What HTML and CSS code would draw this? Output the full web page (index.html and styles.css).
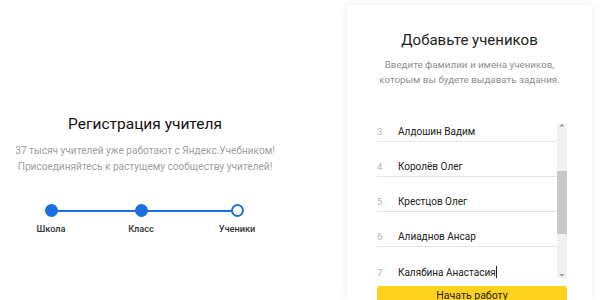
FILE: index.html
```html
<!DOCTYPE html>
<html lang="ru">
<head>
    <meta charset="UTF-8">
    <title>Регистрация учителя</title>
    <link rel="stylesheet" href="styles.css">
</head>
<body>
    <div class="page">
        <div class="intro">
            <h1>Регистрация учителя</h1>
            <p class="lead">37 тысяч учителей уже работают с Яндекс.Учебником!<br>Присоединяйтесь к растущему сообществу учителей!</p>
            <div class="steps">
                <div class="step done"><span class="dot"></span><span class="step-name">Школа</span></div>
                <div class="step done"><span class="dot"></span><span class="step-name">Класс</span></div>
                <div class="step current"><span class="dot"></span><span class="step-name">Ученики</span></div>
            </div>
        </div>
        <div class="card">
            <h2>Добавьте учеников</h2>
            <p class="hint">Введите фамилии и имена учеников,<br>которым вы будете выдавать задания.</p>
            <div class="pupils">
                <ol class="pupil-list">
                    <li class="pupil first"><span class="num">3</span><span class="name">Алдошин Вадим</span></li>
                    <li class="pupil"><span class="num">4</span><span class="name">Королёв Олег</span></li>
                    <li class="pupil"><span class="num">5</span><span class="name">Крестцов Олег</span></li>
                    <li class="pupil"><span class="num">6</span><span class="name">Алиаднов Ансар</span></li>
                    <li class="pupil last"><span class="num">7</span><span class="name">Калябина Анастасия<span class="caret"></span></span></li>
                </ol>
                <div class="scrollbar">
                    <span class="arrow">&#8963;</span>
                    <div class="track"><div class="thumb"></div></div>
                    <span class="arrow">&#8964;</span>
                </div>
            </div>
            <button class="start">Начать работу</button>
        </div>
    </div>
</body>
</html>
```

FILE: styles.css
```css
body {
    margin: 0;
    font-family: Roboto, "Liberation Sans", Arial, sans-serif;
    background-color: #fff;
    color: #222;
    overflow: hidden;
}
.page {
    display: flex;
    height: 300px;
}
.intro {
    width: 290px;
    padding-top: 115px;
    text-align: center;
}
h1 {
    margin: 0;
    font-size: 15.5px;
    font-weight: normal;
    color: #111;
}
.lead {
    margin: 10px 0 0;
    font-size: 10.1px;
    line-height: 16px;
    color: #a0a0a0;
}
.steps {
    display: grid;
    grid-template-columns: 90px 96px 56px;
    margin: 27px 0 0 23px;
    position: relative;
}
.steps::before {
    content: "";
    position: absolute;
    left: 28px;
    width: 186px;
    top: 8px;
    height: 2px;
    background-color: #1a6fe0;
}
.step {
    width: 56px;
    display: flex;
    flex-direction: column;
    align-items: center;
    position: relative;
}
.dot {
    width: 13px;
    height: 13px;
    border-radius: 50%;
    background-color: #1a6fe0;
    margin-top: 2px;
    box-sizing: border-box;
}
.current .dot {
    background-color: #fff;
    border: 2.5px solid #1a6fe0;
}
.step-name {
    margin-top: 6px;
    font-size: 9.2px;
    font-weight: 500;
    color: #333;
}
.card {
    margin: 5px 0 0 57px;
    width: 245px;
    background-color: #fff;
    box-shadow: 0 0 8px rgba(0,0,0,0.08);
    text-align: center;
}
h2 {
    margin: 26px 0 0;
    font-size: 15px;
    font-weight: normal;
    color: #222;
}
.hint {
    margin: 8px 0 0;
    font-size: 9.8px;
    line-height: 15px;
    color: #8f8f8f;
}
.pupils {
    display: flex;
    margin: 36px 25px 0 30px;
    height: 155px;
}
.pupil-list {
    list-style: none;
    margin: 0;
    padding: 0;
    width: 180px;
    text-align: left;
}
.pupil {
    display: flex;
    align-items: flex-end;
    height: 35px;
    padding-bottom: 4px;
    box-sizing: border-box;
    border-bottom: 1px solid #e6e6e6;
}
.pupil.first {
    height: 19px;
}
.pupil.last {
    height: 32px;
    padding-bottom: 1px;
    border-bottom: none;
}
.num {
    width: 21px;
    font-size: 9.5px;
    color: #b5b5b5;
}
.name {
    font-size: 10px;
    color: #222;
}
.caret {
    display: inline-block;
    width: 1px;
    height: 12px;
    background-color: #222;
    vertical-align: -2px;
}
.scrollbar {
    width: 10px;
    background-color: #f1f1f1;
    display: flex;
    flex-direction: column;
    align-items: center;
}
.arrow {
    font-size: 9px;
    line-height: 10px;
    height: 10px;
    color: #555;
}
.track {
    flex: 1;
    width: 100%;
    padding-top: 38px;
}
.thumb {
    height: 63px;
    background-color: #c8c8c8;
}
.start {
    display: block;
    margin: 8px 0 0 30px;
    width: 190px;
    height: 30px;
    border: none;
    border-radius: 3px;
    background-color: #ffd21f;
    font-family: Roboto, "Liberation Sans", Arial, sans-serif;
    font-size: 10.5px;
    color: #222;
    padding: 0 0 11px;
}
```
